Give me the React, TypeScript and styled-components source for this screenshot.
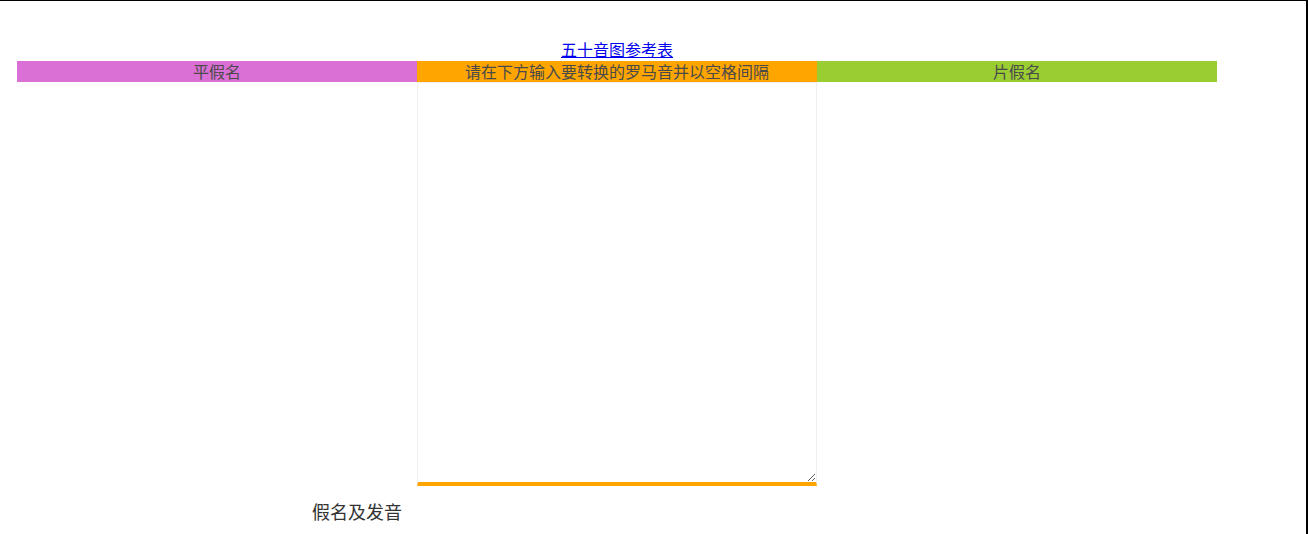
import React from "react";
import styled, { createGlobalStyle } from "styled-components";

const GlobalStyle = createGlobalStyle`
  html, body {
    margin: 0;
    padding: 0;
    background: #fff;
  }
  body {
    font-family: "Noto Sans CJK SC", "Noto Sans", sans-serif;
  }
`;

const Page = styled.div`
  box-sizing: border-box;
  min-height: 100vh;
  border-top: 1px solid #000;
  border-right: 2px solid #000;
  padding: 36px 0 0 17px;
`;

const Container = styled.div`
  width: 1200px;
`;

const LinkRow = styled.div`
  text-align: center;
  font-size: 16px;
  line-height: 24px;
  height: 24px;
`;

const RefLink = styled.a`
  color: #0000ee;
  text-decoration: underline;
`;

const Columns = styled.div`
  display: flex;
`;

const Column = styled.div`
  width: 400px;
  display: flex;
  flex-direction: column;
`;

const ColumnHeader = styled.div<{ $bg: string }>`
  background: ${(p) => p.$bg};
  color: #4a4a4a;
  text-align: center;
  font-size: 16px;
  line-height: 21px;
  height: 21px;
`;

const Input = styled.textarea`
  box-sizing: border-box;
  width: 400px;
  height: 404px;
  margin: 0;
  border: 1px solid #eee;
  border-bottom: 4px solid orange;
  outline: none;
  font-family: inherit;
  font-size: 16px;
`;

const SectionTitle = styled.h2`
  margin: 12px 0 0 295px;
  font-size: 18px;
  font-weight: normal;
  line-height: 26px;
  color: #333;
`;

export default function App() {
  return (
    <>
      <GlobalStyle />
      <Page>
        <Container>
          <LinkRow>
            <RefLink href="#">五十音图参考表</RefLink>
          </LinkRow>
          <Columns>
            <Column>
              <ColumnHeader $bg="orchid">平假名</ColumnHeader>
            </Column>
            <Column>
              <ColumnHeader $bg="orange">请在下方输入要转换的罗马音并以空格间隔</ColumnHeader>
              <Input />
            </Column>
            <Column>
              <ColumnHeader $bg="yellowgreen">片假名</ColumnHeader>
            </Column>
          </Columns>
          <SectionTitle>假名及发音</SectionTitle>
        </Container>
      </Page>
    </>
  );
}
